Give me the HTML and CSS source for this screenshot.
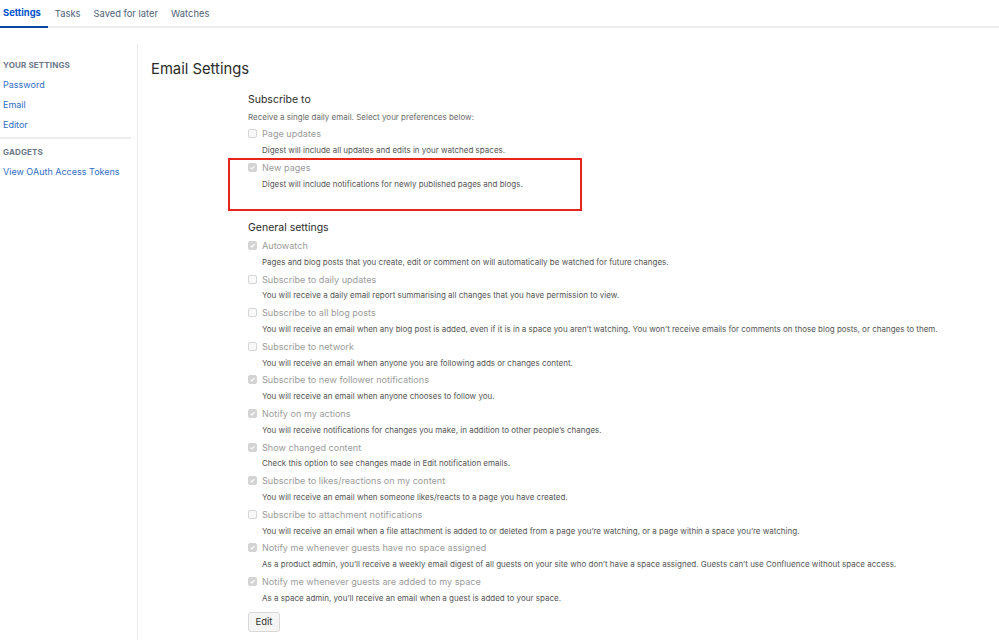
FILE: index.html
```html
<!DOCTYPE html>
<html>
<head>
<meta charset="utf-8">
<link rel="stylesheet" href="styles.css">
</head>
<body>
<nav class="tabs">
  <a class="tab active">Settings</a>
  <a class="tab">Tasks</a>
  <a class="tab">Saved for later</a>
  <a class="tab">Watches</a>
</nav>
<div class="layout">
  <aside class="sidebar">
    <div class="side-group">
      <div class="side-title">YOUR SETTINGS</div>
      <a class="side-link">Password</a>
      <a class="side-link">Email</a>
      <a class="side-link">Editor</a>
    </div>
    <div class="side-group side-group-second">
      <div class="side-title">GADGETS</div>
      <a class="side-link">View OAuth Access Tokens</a>
    </div>
  </aside>
  <main class="main">
    <h1 class="page-title">Email Settings</h1>
    <form class="form">
      <h2 class="section-title">Subscribe to</h2>
      <p class="section-intro">Receive a single daily email. Select your preferences below:</p>
      <div class="item">
        <div class="item-label"><span class="cb"></span>Page updates</div>
        <div class="item-desc">Digest will include all updates and edits in your watched spaces.</div>
      </div>
      <div class="item highlighted">
        <div class="item-label"><span class="cb checked"><svg viewBox="0 0 10 10"><path d="M2.3 5.2 L4.2 7 L7.8 3" /></svg></span>New pages</div>
        <div class="item-desc">Digest will include notifications for newly published pages and blogs.</div>
        <div class="highlight-box"></div>
      </div>

      <h2 class="section-title general">General settings</h2>
      <div class="item">
        <div class="item-label"><span class="cb checked"><svg viewBox="0 0 10 10"><path d="M2.3 5.2 L4.2 7 L7.8 3" /></svg></span>Autowatch</div>
        <div class="item-desc">Pages and blog posts that you create, edit or comment on will automatically be watched for future changes.</div>
      </div>
      <div class="item">
        <div class="item-label"><span class="cb"></span>Subscribe to daily updates</div>
        <div class="item-desc">You will receive a daily email report summarising all changes that you have permission to view.</div>
      </div>
      <div class="item">
        <div class="item-label"><span class="cb"></span>Subscribe to all blog posts</div>
        <div class="item-desc">You will receive an email when any blog post is added, even if it is in a space you aren’t watching. You won’t receive emails for comments on those blog posts, or changes to them.</div>
      </div>
      <div class="item">
        <div class="item-label"><span class="cb"></span>Subscribe to network</div>
        <div class="item-desc">You will receive an email when anyone you are following adds or changes content.</div>
      </div>
      <div class="item">
        <div class="item-label"><span class="cb checked"><svg viewBox="0 0 10 10"><path d="M2.3 5.2 L4.2 7 L7.8 3" /></svg></span>Subscribe to new follower notifications</div>
        <div class="item-desc">You will receive an email when anyone chooses to follow you.</div>
      </div>
      <div class="item">
        <div class="item-label"><span class="cb checked"><svg viewBox="0 0 10 10"><path d="M2.3 5.2 L4.2 7 L7.8 3" /></svg></span>Notify on my actions</div>
        <div class="item-desc">You will receive notifications for changes you make, in addition to other people’s changes.</div>
      </div>
      <div class="item">
        <div class="item-label"><span class="cb checked"><svg viewBox="0 0 10 10"><path d="M2.3 5.2 L4.2 7 L7.8 3" /></svg></span>Show changed content</div>
        <div class="item-desc">Check this option to see changes made in Edit notification emails.</div>
      </div>
      <div class="item">
        <div class="item-label"><span class="cb checked"><svg viewBox="0 0 10 10"><path d="M2.3 5.2 L4.2 7 L7.8 3" /></svg></span>Subscribe to likes/reactions on my content</div>
        <div class="item-desc">You will receive an email when someone likes/reacts to a page you have created.</div>
      </div>
      <div class="item">
        <div class="item-label"><span class="cb"></span>Subscribe to attachment notifications</div>
        <div class="item-desc">You will receive an email when a file attachment is added to or deleted from a page you’re watching, or a page within a space you’re watching.</div>
      </div>
      <div class="item">
        <div class="item-label"><span class="cb checked"><svg viewBox="0 0 10 10"><path d="M2.3 5.2 L4.2 7 L7.8 3" /></svg></span>Notify me whenever guests have no space assigned</div>
        <div class="item-desc">As a product admin, you’ll receive a weekly email digest of all guests on your site who don’t have a space assigned. Guests can’t use Confluence without space access.</div>
      </div>
      <div class="item">
        <div class="item-label"><span class="cb checked"><svg viewBox="0 0 10 10"><path d="M2.3 5.2 L4.2 7 L7.8 3" /></svg></span>Notify me whenever guests are added to my space</div>
        <div class="item-desc">As a space admin, you’ll receive an email when a guest is added to your space.</div>
      </div>
      <button type="button" class="btn">Edit</button>
    </form>
  </main>
</div>
</body>
</html>
```
FILE: styles.css
```css
* { box-sizing: border-box; }
html, body { margin: 0; padding: 0; background: #fff; }
body {
  font-family: Inter, "Noto Sans", "Liberation Sans", sans-serif;
  color: #333;
  width: 999px;
  height: 640px;
  overflow: hidden;
}
.tabs {
  display: flex;
  gap: 4px;
  height: 28px;
  border-bottom: 2px solid #ebecf0;
  font-size: 9.4px;
}
.tab {
  display: block;
  padding: 0 6px 0 3px;
  line-height: 27px;
  color: #505f79;
  text-decoration: none;
}
.tab.active {
  color: #0052cc;
  font-weight: 700;
  padding-right: 7px;
  border-bottom: 2px solid #0747a6;
  margin-bottom: -2px;
  height: 28px;
  line-height: 26px;
}
.layout {
  display: flex;
  height: 612px;
}
.sidebar {
  width: 138px;
  flex-shrink: 0;
  margin-top: 16px;
  border-right: 1px solid #ebecf0;
  padding-top: 11px;
}
.side-group {
  display: flex;
  flex-direction: column;
  width: 131px;
}
.side-group-second {
  border-top: 2px solid #ebecf0;
  margin-top: 2px;
  padding-top: 3px;
}
.side-title {
  font-size: 8px;
  font-weight: 700;
  color: #6b778c;
  letter-spacing: 0.15px;
  line-height: 20px;
  padding-left: 3px;
}
.side-link {
  font-size: 9px;
  color: #2f6ec4;
  line-height: 20px;
  padding-left: 3px;
  text-decoration: none;
}
.main {
  flex: 1;
  padding-left: 13px;
}
.page-title {
  margin: 31px 0 0;
  font-size: 14.8px;
  font-weight: 400;
  line-height: 20px;
  color: #2b2b2b;
}
.form {
  margin: 12.5px 0 0 97px;
  display: flex;
  flex-direction: column;
  align-items: flex-start;
}
.section-title {
  margin: 0;
  font-size: 10.5px;
  font-weight: 400;
  line-height: 16px;
  color: #2b2b2b;
}
.section-title.general {
  margin-top: 27.5px;
  margin-bottom: 1px;
}
.section-intro {
  margin: 1px 0 0;
  font-size: 8px;
  line-height: 17px;
  color: #6b6b6b;
}
.item {
  position: relative;
}
.item-label {
  display: flex;
  align-items: center;
  height: 16.6px;
  font-size: 9.1px;
  color: #9b9b9b;
}
.cb {
  width: 9px;
  height: 9px;
  border: 1px solid #d6d6d6;
  border-radius: 2px;
  background: #f8f8f8;
  margin-right: 5px;
  display: flex;
  align-items: center;
  justify-content: center;
}
.cb.checked {
  background: #d4d4d4;
  border-color: #d4d4d4;
}
.cb svg {
  width: 9px;
  height: 9px;
  fill: none;
  stroke: #fff;
  stroke-width: 1.5;
}
.item-desc {
  padding-left: 14px;
  font-size: 8px;
  line-height: 17px;
  color: #555;
  white-space: nowrap;
}
.highlight-box {
  position: absolute;
  left: -20px;
  top: -1.5px;
  width: 354px;
  height: 53px;
  border: 2px solid #e8251c;
}
.btn {
  margin-top: 5px;
  width: 32px;
  height: 20px;
  padding: 0;
  font-family: inherit;
  font-size: 9.5px;
  color: #333;
  background: #f5f5f5;
  border: 1px solid #d8d8d8;
  border-radius: 3px;
}
```
